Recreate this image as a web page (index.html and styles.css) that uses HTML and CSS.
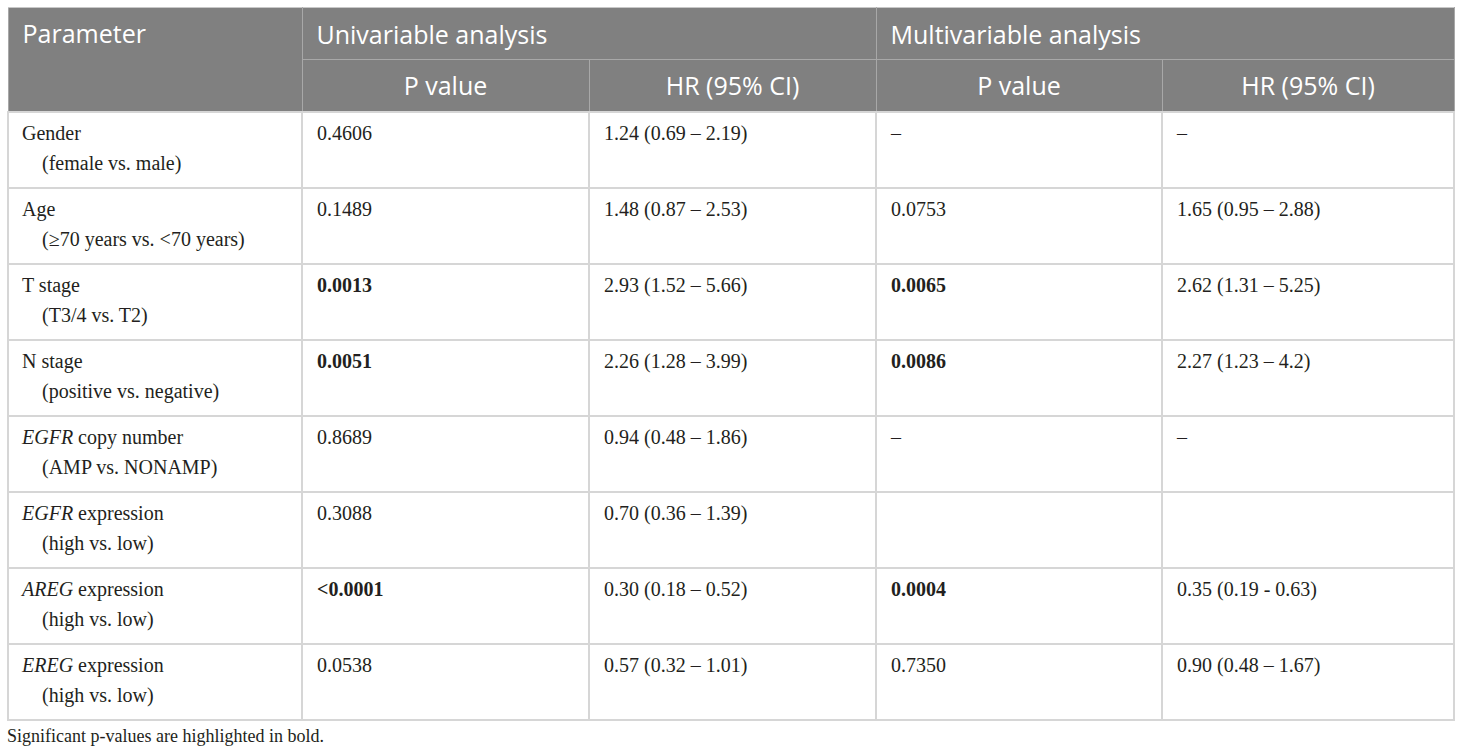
FILE: index.html
```html
<!DOCTYPE html>
<html>
<head>
<meta charset="utf-8">
<link rel="stylesheet" href="styles.css">
</head>
<body>
<div class="wrap">
<table class="tbl">
  <colgroup>
    <col class="c1"><col class="c2"><col class="c3"><col class="c4"><col class="c5">
  </colgroup>
  <thead>
    <tr class="h1">
      <th rowspan="2" class="param">Parameter</th>
      <th colspan="2" class="grp">Univariable analysis</th>
      <th colspan="2" class="grp">Multivariable analysis</th>
    </tr>
    <tr class="h2">
      <th class="sub">P value</th>
      <th class="sub">HR (95% CI)</th>
      <th class="sub">P value</th>
      <th class="sub">HR (95% CI)</th>
    </tr>
  </thead>
  <tbody>
    <tr>
      <td><div class="nm">Gender</div><div class="sb">(female vs. male)</div></td>
      <td>0.4606</td><td>1.24 (0.69 – 2.19)</td><td>–</td><td>–</td>
    </tr>
    <tr>
      <td><div class="nm">Age</div><div class="sb">(≥70 years vs. &lt;70 years)</div></td>
      <td>0.1489</td><td>1.48 (0.87 – 2.53)</td><td>0.0753</td><td>1.65 (0.95 – 2.88)</td>
    </tr>
    <tr>
      <td><div class="nm">T stage</div><div class="sb">(T3/4 vs. T2)</div></td>
      <td><b>0.0013</b></td><td>2.93 (1.52 – 5.66)</td><td><b>0.0065</b></td><td>2.62 (1.31 – 5.25)</td>
    </tr>
    <tr>
      <td><div class="nm">N stage</div><div class="sb">(positive vs. negative)</div></td>
      <td><b>0.0051</b></td><td>2.26 (1.28 – 3.99)</td><td><b>0.0086</b></td><td>2.27 (1.23 – 4.2)</td>
    </tr>
    <tr>
      <td><div class="nm"><i>EGFR</i> copy number</div><div class="sb">(AMP vs. NONAMP)</div></td>
      <td>0.8689</td><td>0.94 (0.48 – 1.86)</td><td>–</td><td>–</td>
    </tr>
    <tr>
      <td><div class="nm"><i>EGFR</i> expression</div><div class="sb">(high vs. low)</div></td>
      <td>0.3088</td><td>0.70 (0.36 – 1.39)</td><td></td><td></td>
    </tr>
    <tr>
      <td><div class="nm"><i>AREG</i> expression</div><div class="sb">(high vs. low)</div></td>
      <td><b>&lt;0.0001</b></td><td>0.30 (0.18 – 0.52)</td><td><b>0.0004</b></td><td>0.35 (0.19 - 0.63)</td>
    </tr>
    <tr>
      <td><div class="nm"><i>EREG</i> expression</div><div class="sb">(high vs. low)</div></td>
      <td>0.0538</td><td>0.57 (0.32 – 1.01)</td><td>0.7350</td><td>0.90 (0.48 – 1.67)</td>
    </tr>
  </tbody>
</table>
<p class="note">Significant p-values are highlighted in bold.</p>
</div>
</body>
</html>
```
FILE: styles.css
```css
html, body {
  margin: 0;
  padding: 0;
  background: #ffffff;
}
.wrap {
  padding: 7px 7px 0 7px;
}
.tbl {
  width: 1446px;
  border-collapse: collapse;
  table-layout: fixed;
  font-family: "Liberation Serif", "Times New Roman", serif;
  font-size: 20px;
  color: #231f20;
}
.c1 { width: 294px; }
.c2 { width: 287px; }
.c3 { width: 287px; }
.c4 { width: 286px; }
.c5 { width: 292px; }

.tbl th {
  background: #808080;
  color: #ffffff;
  font-family: "Open Sans", "Noto Sans", sans-serif;
  font-weight: 400;
  font-size: 25px;
  line-height: 50px;
  height: 52px;
  padding: 0 14px;
  border: 1px solid #a8a8a8;
  box-sizing: border-box;
  vertical-align: middle;
}
.tbl th.param {
  text-align: left;
  vertical-align: top;
}
.tbl th.grp {
  text-align: left;
}
.tbl th.sub {
  text-align: center;
}
.tbl thead tr.h1 th {
  border-top-color: #c8c8c8;
}
.tbl td {
  border: 2px solid #d6d6d6;
  vertical-align: top;
  height: 76px;
  box-sizing: border-box;
  padding: 5px 14px 0 14px;
  line-height: 30px;
}
.tbl td:first-child {
  padding-left: 13px;
}
.nm {
  white-space: nowrap;
}
.sb {
  padding-left: 20px;
  white-space: nowrap;
}
.tbl b {
  font-weight: 700;
}
.note {
  margin: 3px 0 0 0;
  font-family: "Liberation Serif", "Times New Roman", serif;
  font-size: 18px;
  color: #231f20;
  line-height: 24px;
}
```
